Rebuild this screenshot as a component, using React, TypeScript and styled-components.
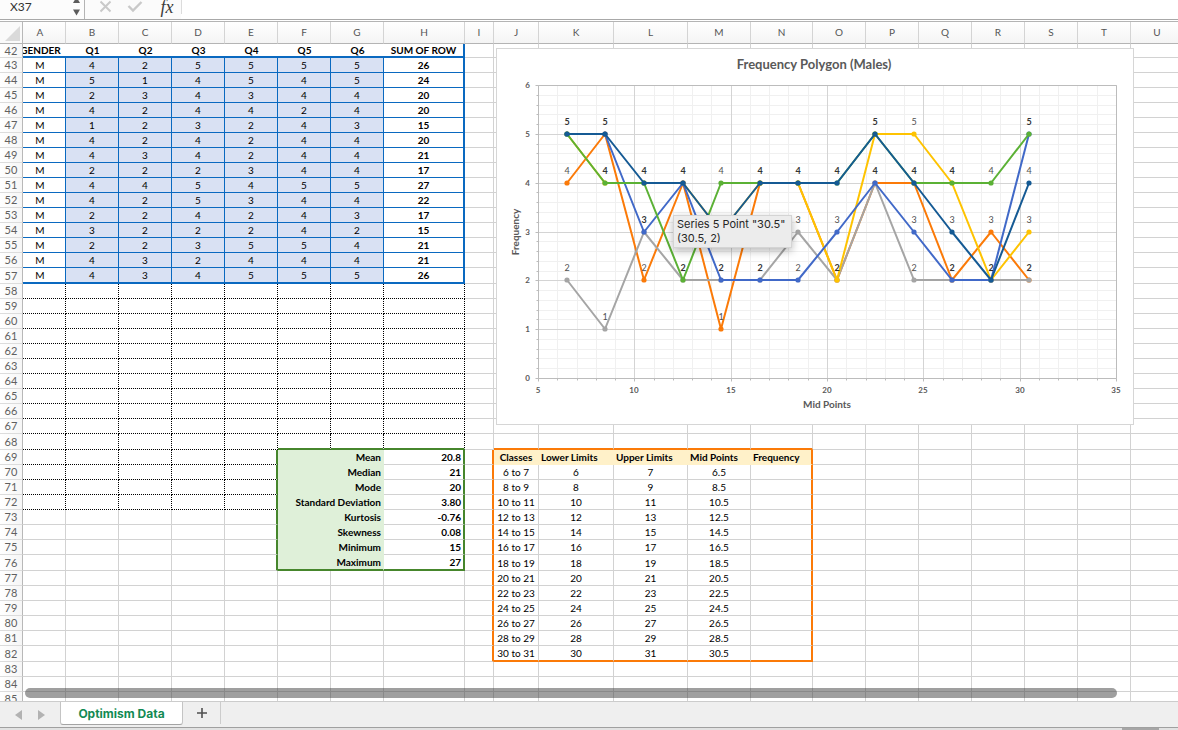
import React from 'react';
import styled, { createGlobalStyle, css } from 'styled-components';

const GlobalStyle = createGlobalStyle`
  *, *::before, *::after { box-sizing: border-box; }
  body { margin: 0; background: #ffffff; }
  button, input { font: inherit; margin: 0; padding: 0; border: 0; background: none; }
`;

const BLUE = '#0a69c0';
const GREEN = '#46862c';
const ORANGE = '#fb7a08';
const GRID = '#d2d2d2';
const STATS_FILL = '#dff0d9';
const CLASS_FILL = '#fff1c9';

const Page = styled.div`
  display: flex;
  flex-direction: column;
  height: 100vh;
  overflow: hidden;
  font-family: Lato, 'Open Sans', sans-serif;
  font-size: 10px;
  color: #000000;
`;

/* ---------- formula bar ---------- */

const FormulaBar = styled.header`
  display: flex;
  flex: none;
  height: 22px;
  background: #ffffff;
  border-bottom: 1px solid #b4b4b4;
`;

const BarBody = styled.div`
  display: flex;
  flex: 1;
  height: 20px;
  border-bottom: 1px solid #a8a8a8;
`;

const NameBox = styled.div`
  display: flex;
  width: 85px;
  background: #fcfcfc;
  border-right: 1px solid #b4b4b4;
`;

const NameInput = styled.input`
  width: 70px;
  height: 13px;
  padding-left: 10px;
  font-size: 12px;
  line-height: 13px;
  color: #333333;
  outline: none;
`;

const Stepper = styled.svg`
  width: 13px;
  height: 17px;
`;

const BarTools = styled.div`
  display: flex;
  align-items: flex-start;
  width: 96px;
  padding-left: 11px;
  background: #fbfbfb;
`;

const ToolButton = styled.button`
  display: flex;
  width: 30px;
  height: 16px;
  svg { width: 20px; height: 16px; }
`;

const FxButton = styled.button`
  width: 22px;
  height: 15px;
  font-family: 'Liberation Serif', serif;
  font-style: italic;
  font-size: 18px;
  line-height: 15px;
  color: #3c3c3c;
`;

const FormulaInput = styled.input`
  flex: 1;
  height: 14px;
  border-left: 1px solid #dcdcdc;
  outline: none;
`;

/* ---------- sheet ---------- */

const Sheet = styled.main`
  position: relative;
  flex: 1;
  min-height: 0;
  overflow: hidden;
`;

const Grid = styled.table`
  table-layout: fixed;
  width: 100%;
  min-width: 1184px;
  border-collapse: separate;
  border-spacing: 0;
`;

const Corner = styled.th`
  padding: 0;
  height: 22px;
  background: #fafafa;
  border-right: 1px solid #b8b8b8;
  border-bottom: 1px solid #b4b4b4;
  svg { display: block; width: 22px; height: 21px; }
`;

const ColumnHead = styled.th<{ $clipped?: boolean }>`
  padding: 0 ${p => (p.$clipped ? 8 : 0)}px 2px 0;
  background: linear-gradient(#ffffff, #f4f4f4);
  border-right: 1px solid #d4d4d4;
  border-bottom: 1px solid #b4b4b4;
  font-weight: 400;
  color: #555555;
`;

const RowHead = styled.th`
  padding: 0;
  background: linear-gradient(90deg, #ffffff, #f6f6f6);
  border-right: 1px solid #b8b8b8;
  border-bottom: 1px solid #dcdcdc;
  font-weight: 400;
  font-size: 11px;
  line-height: 12px;
  color: #606060;
`;

const Row = styled.tr<{ $height: number }>`
  height: ${p => p.$height}px;
`;

type Align = 'left' | 'center' | 'right';

interface CellLook {
  right: string;
  bottom: string;
  fill?: string;
  bold?: boolean;
  align?: Align;
  clipped?: boolean;
}

const Cell = styled.td<{ $look: CellLook }>`
  padding: 0;
  overflow: hidden;
  line-height: 12px;
  white-space: nowrap;
  ${({ $look }) => css`
    border-right: ${$look.right};
    border-bottom: ${$look.bottom};
    background: ${$look.fill ?? '#ffffff'};
    font-weight: ${$look.bold ? 700 : 400};
  `}
`;

const justify = { left: 'flex-start', center: 'center', right: 'flex-end' };

const CellText = styled.div<{ $align: Align; $clipped?: boolean }>`
  display: flex;
  justify-content: ${p => justify[p.$align]};
  padding: 0 ${p => (p.$clipped ? 8 : p.$align === 'right' ? 2 : 0)}px 0
    ${p => (p.$align === 'left' ? 2 : 0)}px;
`;

const ScrollThumb = styled.div`
  position: absolute;
  left: 25px;
  right: 61px;
  bottom: 3px;
  height: 10px;
  border-radius: 5px;
  background: rgba(70, 70, 70, 0.52);
`;

/* ---------- chart ---------- */

const ChartCard = styled.figure`
  position: absolute;
  left: 496px;
  top: 26px;
  width: 638px;
  height: 377px;
  margin: 0;
  background: #ffffff;
  border: 1px solid #d6d6d6;
  svg { display: block; font-family: Lato, sans-serif; }
`;

const Tooltip = styled.div`
  position: absolute;
  left: 176px;
  top: 166px;
  width: 119px;
  height: 33px;
  padding: 1px 3px;
  background: #ececec;
  border: 1px solid #d4d4d4;
  box-shadow: 0 3px 8px rgba(0, 0, 0, 0.28);
  font-family: Inter, 'Liberation Sans', sans-serif;
  font-size: 11px;
  line-height: 14px;
  white-space: nowrap;
  color: #262626;
`;

/* ---------- sheet tabs ---------- */

const TabBar = styled.nav`
  display: flex;
  flex: none;
  height: 27px;
  background: #efefef;
  border-top: 1px solid #cccccc;
  border-bottom: 1px solid #a0a0a0;
`;

const TabArrows = styled.div`
  display: flex;
  align-items: center;
  justify-content: space-between;
  width: 60px;
  padding: 0 14px;
`;

const ArrowButton = styled.button`
  display: flex;
  svg { width: 9px; height: 12px; fill: #b2b2b2; }
`;

const SheetTab = styled.button`
  width: 123px;
  height: 23px;
  background: #ffffff;
  border: 1px solid #c4c4c4;
  border-top: 0;
  border-bottom-color: #a4a4a4;
  border-radius: 0 0 3px 3px;
  font-family: Inter, 'Liberation Sans', sans-serif;
  font-size: 12px;
  font-weight: 700;
  color: #128a53;
`;

const AddTab = styled.button`
  display: flex;
  align-items: center;
  justify-content: center;
  width: 38px;
  height: 22px;
  border-right: 1px solid #cccccc;
  svg { width: 10px; height: 10px; }
`;

const StatusEdge = styled.footer`
  display: flex;
  justify-content: flex-end;
  flex: none;
  height: 2px;
  padding-right: 19px;
  background: #e2e2e2;
`;

const StatusThumb = styled.span`
  width: 37px;
  background: #a6a6a6;
`;

/* ---------- data ---------- */

const columns: [string, number | undefined][] = [
  ['A', 43], ['B', 53], ['C', 53], ['D', 53], ['E', 53], ['F', 53], ['G', 53],
  ['H', 81], ['I', 29], ['J', 45], ['K', 75], ['L', 74], ['M', 63], ['N', 62],
  ['O', 53], ['P', 53], ['Q', 53], ['R', 53], ['S', 53], ['T', 53], ['U', undefined],
];

const answers: number[][] = [
  [4, 2, 5, 5, 5, 5], [5, 1, 4, 5, 4, 5], [2, 3, 4, 3, 4, 4], [4, 2, 4, 4, 2, 4],
  [1, 2, 3, 2, 4, 3], [4, 2, 4, 2, 4, 4], [4, 3, 4, 2, 4, 4], [2, 2, 2, 3, 4, 4],
  [4, 4, 5, 4, 5, 5], [4, 2, 5, 3, 4, 4], [2, 2, 4, 2, 4, 3], [3, 2, 2, 2, 4, 2],
  [2, 2, 3, 5, 5, 4], [4, 3, 2, 4, 4, 4], [4, 3, 4, 5, 5, 5],
];

const stats: [string, string][] = [
  ['Mean', '20.8'], ['Median', '21'], ['Mode', '20'], ['Standard Deviation', '3.80'],
  ['Kurtosis', '-0.76'], ['Skewness', '0.08'], ['Minimum', '15'], ['Maximum', '27'],
];

const headings = ['GENDER', 'Q1', 'Q2', 'Q3', 'Q4', 'Q5', 'Q6', 'SUM OF ROW'];
const classHeadings = ['Classes', 'Lower Limits', 'Upper Limits', 'Mid Points', 'Frequency'];

const tallRows = [57, 68, 76, 82];
const rowHeight = (row: number) => (row === 42 ? 14 : tallRows.includes(row) ? 16 : 15);

const H = 7, I = 8, J = 9, N = 13;

function cellText(row: number, col: number): string {
  if (row === 42 && col <= H) return headings[col];
  if (row >= 43 && row <= 57 && col <= H) {
    const line = answers[row - 43];
    if (col === 0) return 'M';
    return String(col === H ? line.reduce((a, b) => a + b, 0) : line[col - 1]);
  }
  if (row >= 69 && row <= 76) {
    if (col === 5) return stats[row - 69][0];
    if (col === H) return stats[row - 69][1];
  }
  if (row === 69 && col >= J && col <= N) return classHeadings[col - J];
  if (row >= 70 && row <= 82 && col >= J && col < N) {
    const low = 6 + (row - 70) * 2;
    return [`${low} to ${low + 1}`, `${low}`, `${low + 1}`, `${low + 0.5}`][col - J];
  }
  return '';
}

function cellLook(row: number, col: number): CellLook {
  const thin = (c: string) => `1px solid ${c}`;
  const thick = (c: string) => `2px solid ${c}`;
  const look: CellLook = { right: thin(GRID), bottom: thin(GRID), clipped: col === 0 };

  if (col <= H) {
    if (row === 42) {
      look.right = col === H ? thick(BLUE) : '0';
      look.bottom = thick(BLUE);
      look.bold = true;
    } else if (row <= 57) {
      look.right = col === H ? thick(BLUE) : thin(BLUE);
      look.bottom = row === 57 ? thick(BLUE) : thin(BLUE);
      if (col > 0 && col < H) look.fill = '#d9e1f3';
      look.bold = col === H;
    } else if (row <= 68 || (row <= 72 && col <= 4)) {
      look.right = '1px dotted #000000';
      look.bottom = row === 68 && col > 4 ? thick(GREEN) : '1px dotted #000000';
    }
    if (row >= 69 && row <= 76) {
      if (col === 4) look.right = thick(GREEN);
      if (col >= 5) {
        look.bold = true;
        look.align = 'right';
        look.right = col === H ? thick(GREEN) : thin(STATS_FILL);
        if (col < H) {
          look.fill = STATS_FILL;
          look.bottom = thin(STATS_FILL);
        }
        if (row === 76) look.bottom = thick(GREEN);
      }
    }
  }

  if (col >= J && col <= N) {
    if (row === 68 || row === 82) look.bottom = thick(ORANGE);
    if (row === 69) {
      look.fill = CLASS_FILL;
      look.bold = true;
      look.right = thin(CLASS_FILL);
      look.bottom = thin(CLASS_FILL);
      look.align = col === J ? 'center' : 'left';
    }
  }
  if (row >= 69 && row <= 82 && (col === I || col === N)) look.right = thick(ORANGE);
  return look;
}

const rows = Array.from({ length: 44 }, (_, i) => 42 + i);

function SheetRow({ row }: { row: number }) {
  return (
    <Row $height={rowHeight(row)}>
      <RowHead scope="row">{row}</RowHead>
      {columns.map(([name], col) => {
        const inStats = row >= 69 && row <= 76;
        if (inStats && col === 6) return null;
        const look = cellLook(row, col);
        const text = cellText(row, col);
        return (
          <Cell key={name} $look={look} colSpan={inStats && col === 5 ? 2 : 1}>
            {text && (
              <CellText $align={look.align ?? 'center'} $clipped={look.clipped}>
                {text}
              </CellText>
            )}
          </Cell>
        );
      })}
    </Row>
  );
}

/* ---------- frequency polygon ---------- */

const seriesColors = ['#fb7a08', '#a5a5a5', '#fec301', '#4169c8', '#5bb135', '#155a94'];
const plotted = answers.slice(0, 13);
const series = seriesColors.map((color, s) => ({
  color,
  values: plotted.map(line => line[s]),
}));

/* the tooltip lies over this point, so it carries no label */
const hovered = { index: 4, value: 3 };

const PLOT = { left: 41, right: 619, top: 36, bottom: 329 };
const px = (x: number) => Math.round(PLOT.left + ((x - 5) * (PLOT.right - PLOT.left)) / 30);
const py = (y: number) => Math.round(PLOT.bottom - (y * (PLOT.bottom - PLOT.top)) / 6);
/* hairlines sit on pixel centres */
const gx = (x: number) => px(x) + 0.5;
const gy = (y: number) => py(y) + 0.5;
const midPoint = (i: number) => 6.5 + i * 2;

function FrequencyPolygon() {
  const xs = Array.from({ length: 31 }, (_, i) => 5 + i);
  const ys = Array.from({ length: 31 }, (_, i) => i / 5);
  const major = (list: number[], step: number) => list.filter(v => v % step === 0);
  const left = gx(5), right = gx(35), top = gy(6), bottom = gy(0);

  return (
    <svg width="636" height="375" role="img" aria-label="Frequency Polygon (Males)">
      <text x="317" y="20" textAnchor="middle" fontSize="13" fontWeight="700" fill="#595959">
        Frequency Polygon (Males)
      </text>
      <g stroke="#f0f0f0">
        {xs.map(x => <line key={x} x1={gx(x)} x2={gx(x)} y1={top} y2={bottom} />)}
        {ys.map(y => <line key={y} x1={left} x2={right} y1={gy(y)} y2={gy(y)} />)}
      </g>
      <g stroke="#d4d4d4">
        {major(xs, 5).map(x => <line key={x} x1={gx(x)} x2={gx(x)} y1={top} y2={bottom} />)}
        {major(ys, 1).map(y => <line key={y} x1={left} x2={right} y1={gy(y)} y2={gy(y)} />)}
      </g>
      <g stroke="#bcbcbc">
        <path d={`M${left} ${bottom}V${top}H${right}V${bottom}Z`} fill="none" />
        {xs.map(x => <line key={x} x1={gx(x)} x2={gx(x)} y1={bottom} y2={bottom + (x % 5 ? 2 : 3)} />)}
        {ys.map(y => <line key={y} x1={left - (y % 1 ? 2 : 3)} x2={left} y1={gy(y)} y2={gy(y)} />)}
      </g>

      {series.map(({ color, values }) => (
        <g key={color}>
          <polyline
            points={values.map((v, i) => `${px(midPoint(i))},${py(v)}`).join(' ')}
            fill="none"
            stroke={color}
            strokeWidth="2"
            strokeLinejoin="round"
          />
          {values.map((v, i) => (
            <circle key={i} cx={px(midPoint(i))} cy={py(v)} r="2.6" fill={color} />
          ))}
        </g>
      ))}

      <g fontSize="9" textAnchor="middle">
        {plotted.map((line, i) =>
          [...new Set(line)]
            .filter(v => !(i === hovered.index && v === hovered.value))
            .map(v => {
              const shared = line.filter(n => n === v).length > 1;
              return (
                <text
                  key={`${i}-${v}`}
                  x={px(midPoint(i))}
                  y={py(v) - 9}
                  fontWeight={shared ? 700 : 400}
                  fill={shared ? '#333333' : '#505050'}
                >
                  {v}
                </text>
              );
            })
        )}
      </g>

      <g fontSize="8" fontWeight="700" fill="#595959">
        {major(ys, 1).map(y => (
          <text key={y} x="33" y={py(y) + 3} textAnchor="end">{y}</text>
        ))}
        {major(xs, 5).map(x => (
          <text key={x} x={px(x)} y="344" textAnchor="middle">{x}</text>
        ))}
      </g>
      <g fontSize="10" fontWeight="700" fill="#595959" textAnchor="middle">
        <text x="330" y="359">Mid Points</text>
        <text transform="translate(22 183) rotate(-90)">Frequency</text>
      </g>
    </svg>
  );
}

export default function App() {
  return (
    <>
      <GlobalStyle />
      <Page>
        <FormulaBar>
          <BarBody>
            <NameBox>
              <NameInput aria-label="Name box" defaultValue="X37" />
              <Stepper viewBox="0 0 13 17" fill="#5c5c5c" aria-hidden="true">
                <path d="M3 3L6.500 -3L10 3Z" />
                <path d="M3 9.500L6.500 15.500L10 9.500Z" />
              </Stepper>
            </NameBox>
            <BarTools>
              <ToolButton aria-label="Cancel">
                <svg viewBox="0 0 20 16" stroke="#c9c9c9" strokeWidth="2" fill="none">
                  <path d="M4.500 1.500L14.500 11.500M14.500 1.500L4.500 11.500" />
                </svg>
              </ToolButton>
              <ToolButton aria-label="Enter">
                <svg viewBox="0 0 20 16" stroke="#c9c9c9" strokeWidth="2.400" fill="none">
                  <path d="M2.500 6L7 10.500L15.500 2" />
                </svg>
              </ToolButton>
              <FxButton aria-label="Insert function">fx</FxButton>
            </BarTools>
            <FormulaInput aria-label="Formula" />
          </BarBody>
        </FormulaBar>

        <Sheet>
          <Grid>
            <colgroup>
              <col width={23} />
              {columns.map(([name, width]) => <col key={name} width={width} />)}
            </colgroup>
            <thead>
              <tr>
                <Corner aria-label="Select all">
                  <svg viewBox="0 0 22 21" aria-hidden="true">
                    <path d="M20 4V19H5Z" fill="#dadada" />
                  </svg>
                </Corner>
                {columns.map(([name], col) => (
                  <ColumnHead key={name} scope="col" $clipped={col === 0}>{name}</ColumnHead>
                ))}
              </tr>
            </thead>
            <tbody>
              {rows.map(row => <SheetRow key={row} row={row} />)}
            </tbody>
          </Grid>

          <ChartCard>
            <FrequencyPolygon />
            <Tooltip role="tooltip">
              Series 5 Point "30.5"<br />(30.5, 2)
            </Tooltip>
          </ChartCard>
          <ScrollThumb />
        </Sheet>

        <TabBar>
          <TabArrows>
            <ArrowButton aria-label="Previous sheet">
              <svg viewBox="0 0 9 12"><path d="M8 1V11L1 6Z" /></svg>
            </ArrowButton>
            <ArrowButton aria-label="Next sheet">
              <svg viewBox="0 0 9 12"><path d="M1 1V11L8 6Z" /></svg>
            </ArrowButton>
          </TabArrows>
          <SheetTab>Optimism Data</SheetTab>
          <AddTab aria-label="Add sheet">
            <svg viewBox="0 0 10 10" stroke="#505050" strokeWidth="1.600">
              <path d="M5 0V10M0 5H10" />
            </svg>
          </AddTab>
        </TabBar>
        <StatusEdge><StatusThumb /></StatusEdge>
      </Page>
    </>
  );
}
